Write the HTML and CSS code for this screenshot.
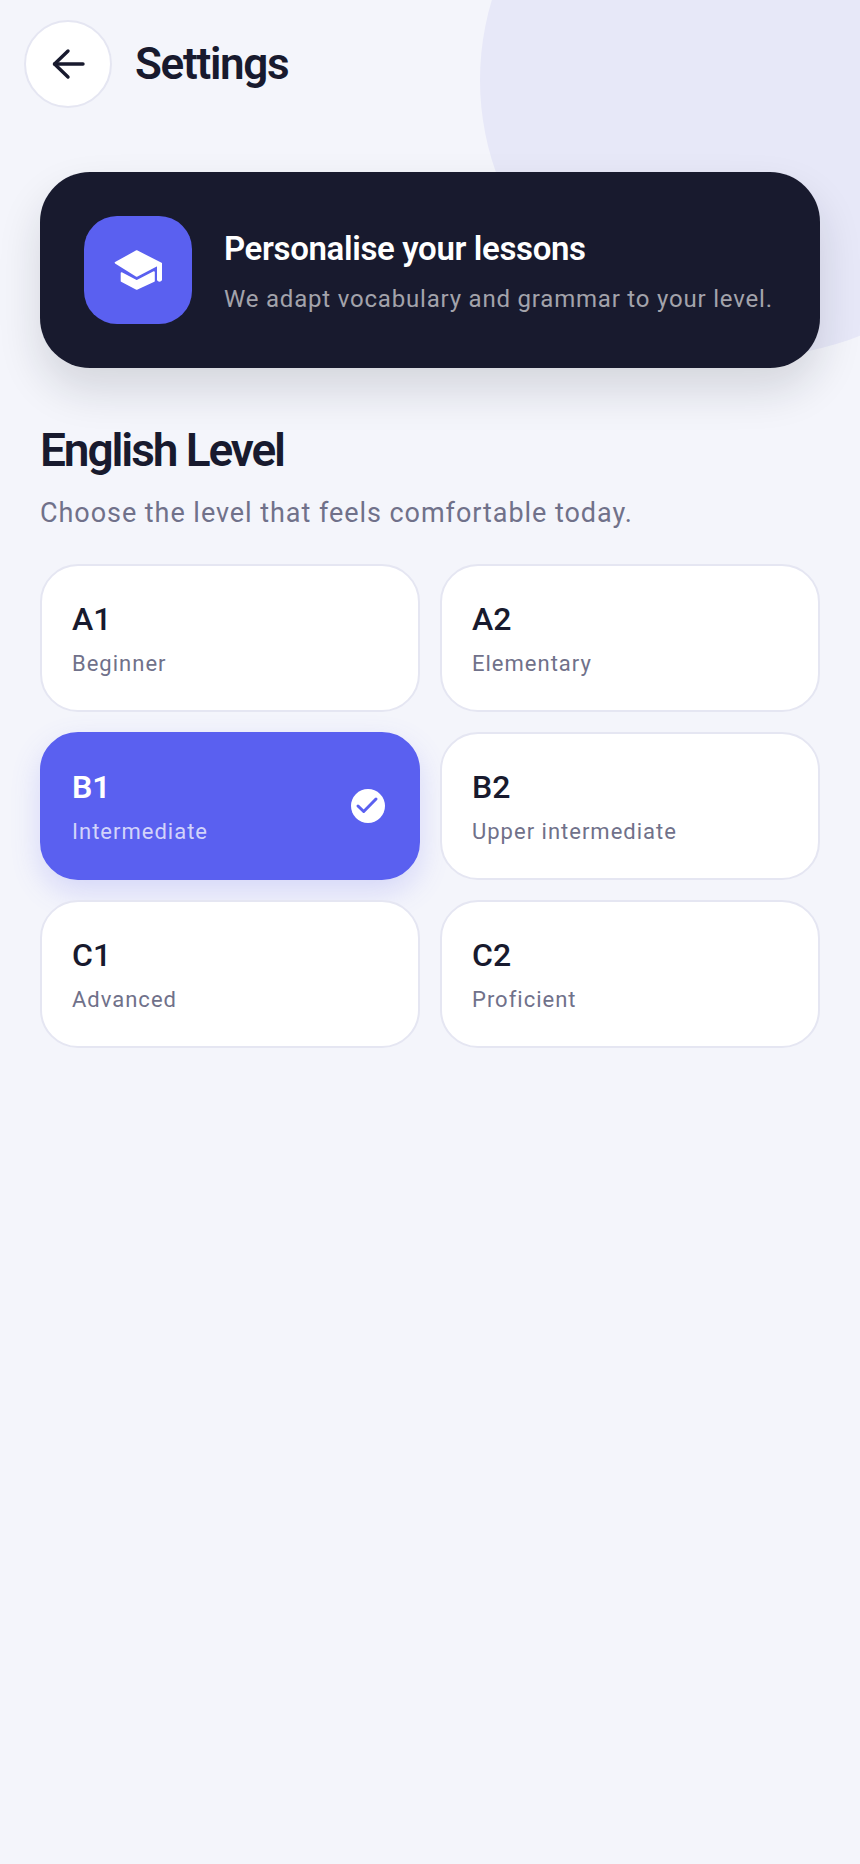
FILE: index.html
```html
<!DOCTYPE html>
<html lang="en">
<head>
<meta charset="utf-8">
<title>Settings</title>
<link rel="stylesheet" href="styles.css">
</head>
<body>
<div class="screen">
  <div class="blob"></div>
  <header class="topbar">
    <button class="back" aria-label="Back">
      <svg width="40" height="40" viewBox="0 0 40 40" fill="none" stroke="#181A2E" stroke-width="3.4" stroke-linecap="round" stroke-linejoin="round"><path d="M35 20H6.5"/><path d="M20 7 6.5 20 20 33"/></svg>
    </button>
    <h1 class="title">Settings</h1>
  </header>
  <main class="content">
    <section class="hero">
      <div class="hero-icon">
        <svg width="48" height="40" viewBox="0 0 48 40" fill="#fff" stroke="#fff" stroke-width="1.6" stroke-linejoin="round"><path d="M22.7 1 1.5 12.7 22.7 26 43.8 15V30a1.9 1.9 0 0 0 3.4 0V13.5L22.7 1Z"/><path d="M7.5 23 22.7 31 40 22V31L22.7 39 7.5 31Z"/></svg>
      </div>
      <div class="hero-text">
        <h2 class="hero-title">Personalise your lessons</h2>
        <p class="hero-sub">We adapt vocabulary and grammar to your level.</p>
      </div>
    </section>
    <h2 class="section-title">English Level</h2>
    <p class="section-sub">Choose the level that feels comfortable today.</p>
    <div class="grid">
      <div class="card"><div class="code">A1</div><div class="name">Beginner</div></div>
      <div class="card"><div class="code">A2</div><div class="name">Elementary</div></div>
      <div class="card selected">
        <div class="code">B1</div><div class="name">Intermediate</div>
        <svg class="check" width="34" height="34" viewBox="0 0 34 34"><circle cx="17" cy="17" r="17" fill="#fff"/><path d="M7 17 12.7 22.5 25 10" fill="none" stroke="#5A60F0" stroke-width="3" stroke-linecap="round" stroke-linejoin="round"/></svg>
      </div>
      <div class="card"><div class="code">B2</div><div class="name">Upper intermediate</div></div>
      <div class="card"><div class="code">C1</div><div class="name">Advanced</div></div>
      <div class="card"><div class="code">C2</div><div class="name">Proficient</div></div>
    </div>
  </main>
</div>
</body>
</html>
```
FILE: styles.css
```css
* { box-sizing: border-box; }
html, body { margin: 0; padding: 0; }
body {
  width: 860px;
  height: 1864px;
  overflow: hidden;
  background: #F4F5FB;
  font-family: Roboto, "Liberation Sans", sans-serif;
  color: #181A2E;
}
.screen { position: relative; width: 860px; height: 1864px; overflow: hidden; }
.blob {
  position: absolute;
  left: 480px;
  top: -196px;
  width: 552px;
  height: 552px;
  border-radius: 50%;
  background: #E7E8F8;
}
.topbar {
  position: relative;
  display: flex;
  align-items: center;
  gap: 23px;
  padding: 20px 24px 0;
}
.back {
  width: 88px;
  height: 88px;
  padding: 0;
  display: flex;
  align-items: center;
  justify-content: center;
  background: #fff;
  border: 2px solid #E5E6F2;
  border-radius: 50%;
}
.title {
  margin: 0;
  font-size: 44px;
  line-height: 50px;
  font-weight: 600;
  letter-spacing: -1.3px;
}
.content { position: relative; padding: 64px 40px 0; }
.hero {
  display: flex;
  align-items: center;
  gap: 32px;
  height: 196px;
  padding: 0 44px;
  background: #181A2E;
  border-radius: 50px;
  box-shadow: 0 22px 44px rgba(24, 26, 46, 0.14);
}
.hero-icon {
  flex: none;
  width: 108px;
  height: 108px;
  display: flex;
  align-items: center;
  justify-content: center;
  background: #5A60F0;
  border-radius: 33px;
}
.hero-text { padding-top: 4px; }
.hero-title {
  margin: 0;
  font-size: 33px;
  line-height: 38px;
  font-weight: 600;
  color: #fff;
  letter-spacing: -0.35px;
}
.hero-sub {
  margin: 15px 0 0;
  font-size: 24px;
  line-height: 32px;
  color: #A3A3AB;
  letter-spacing: 0.8px;
  white-space: nowrap;
}
.section-title {
  margin: 56px 0 0;
  font-size: 46px;
  line-height: 52px;
  font-weight: 600;
  letter-spacing: -2.1px;
}
.section-sub {
  margin: 19px 0 0;
  font-size: 27px;
  line-height: 36px;
  color: #70718A;
  letter-spacing: 0.95px;
}
.grid {
  display: grid;
  grid-template-columns: 380px 380px;
  gap: 20px 20px;
  margin-top: 33px;
}
.card {
  position: relative;
  height: 148px;
  padding: 34px 30px 0;
  background: #fff;
  border: 2px solid #E5E6F2;
  border-radius: 38px;
}
.code { font-size: 32px; line-height: 38px; font-weight: 500; }
.name {
  margin-top: 11px;
  font-size: 22px;
  line-height: 30px;
  color: #70718A;
  letter-spacing: 1px;
}
.selected {
  background: #5A60F0;
  border-color: #5A60F0;
  box-shadow: 0 12px 30px rgba(90, 96, 240, 0.2);
}
.selected .code { color: #fff; font-weight: 600; }
.selected .name { color: #D2D4FA; }
.check {
  position: absolute;
  right: 33px;
  top: 55px;
}
```
